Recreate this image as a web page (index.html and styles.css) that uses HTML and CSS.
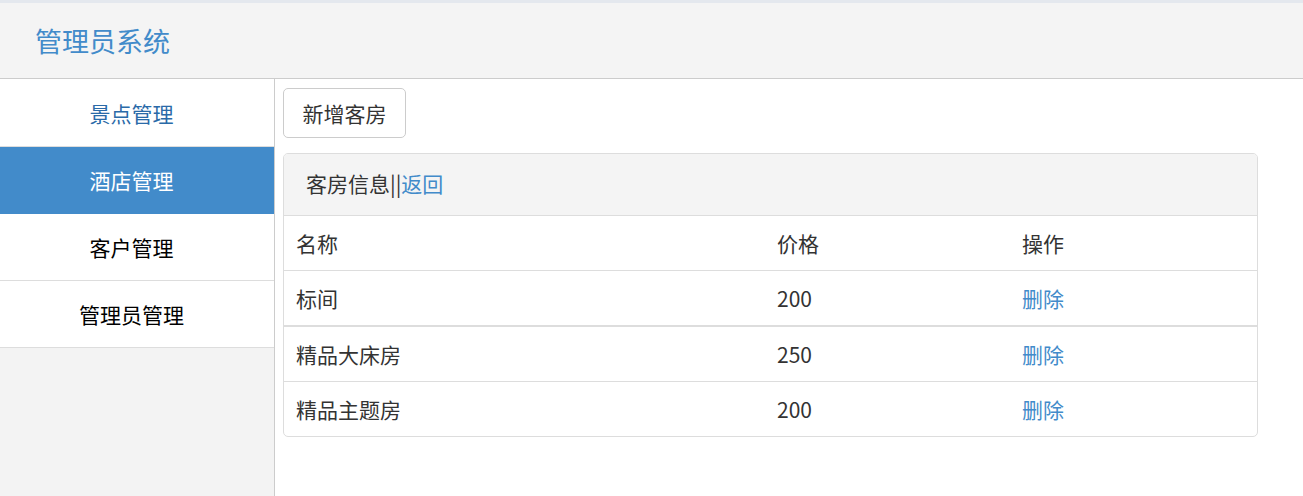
FILE: index.html
```html
<!DOCTYPE html>
<html lang="zh-CN">
<head>
<meta charset="utf-8">
<title>管理员系统</title>
<link rel="stylesheet" href="styles.css">
</head>
<body>
<div class="topstrip"></div>
<header class="header">
  <a class="brand" href="#">管理员系统</a>
</header>
<div class="main">
  <nav class="sidebar">
    <a class="nav-item nav-link" href="#">景点管理</a>
    <a class="nav-item active" href="#">酒店管理</a>
    <a class="nav-item" href="#">客户管理</a>
    <a class="nav-item" href="#">管理员管理</a>
  </nav>
  <section class="content">
    <button class="btn">新增客房</button>
    <div class="panel">
      <div class="panel-heading">客房信息||<a href="#" class="link">返回</a></div>
      <table class="table">
        <thead>
          <tr><th class="c1">名称</th><th class="c2">价格</th><th class="c3">操作</th></tr>
        </thead>
        <tbody>
          <tr class="first"><td>标间</td><td>200</td><td><a href="#" class="link">删除</a></td></tr>
          <tr><td>精品大床房</td><td>250</td><td><a href="#" class="link">删除</a></td></tr>
          <tr class="last"><td>精品主题房</td><td>200</td><td><a href="#" class="link">删除</a></td></tr>
        </tbody>
      </table>
    </div>
  </section>
</div>
</body>
</html>
```

FILE: styles.css
```css
html, body {
  margin: 0;
  padding: 0;
  height: 100%;
}
body {
  font-family: "Noto Sans CJK SC", "Noto Sans", sans-serif;
  font-size: 21px;
  color: #333;
  background: #fff;
  display: flex;
  flex-direction: column;
}
a { text-decoration: none; }
.topstrip {
  height: 3px;
  background: #e4e8ee;
}
.header {
  height: 75px;
  background: #f4f4f4;
  border-bottom: 1px solid #cccccc;
  display: flex;
  align-items: center;
  padding-left: 35px;
}
.brand {
  color: #428bca;
  font-size: 27px;
  line-height: 1;
}
.main {
  flex: 1;
  display: flex;
}
.sidebar {
  width: 274px;
  background: #f3f3f3;
  border-right: 1px solid #cccccc;
  display: flex;
  flex-direction: column;
}
.nav-item {
  height: 66px;
  display: flex;
  align-items: center;
  justify-content: center;
  padding-right: 11px;
  background: #fff;
  color: #000;
  border-bottom: 1px solid #dddddd;
  font-size: 21px;
}
.nav-item:first-child { height: 67px; }
.nav-item.nav-link { color: #2a6aa8; }
.nav-item.active {
  background: #428bca;
  color: #fff;
  border-bottom-color: #428bca;
}
.content {
  flex: 1;
  padding: 9px 0 0 8px;
}
.btn {
  font-family: inherit;
  font-size: 21px;
  color: #333;
  background: #fff;
  border: 1px solid #cccccc;
  border-radius: 5px;
  width: 123px;
  height: 50px;
  padding: 0;
  cursor: pointer;
  display: block;
}
.panel {
  margin-top: 15px;
  width: 973px;
  border: 1px solid #dddddd;
  border-radius: 5px;
  overflow: hidden;
}
.panel-heading {
  background: #f4f4f4;
  height: 62px;
  padding-bottom: 3px;
  box-sizing: border-box;
  border-bottom: 1px solid #dddddd;
  display: flex;
  align-items: center;
  padding-left: 22px;
}
.link { color: #428bca; }
.table {
  width: 100%;
  border-collapse: collapse;
}
.table th, .table td {
  text-align: left;
  font-weight: normal;
  padding: 0 12px;
  height: 54px;
}
.table thead th { border-bottom: 1px solid #dddddd; }
.table tbody tr { border-bottom: 1px solid #dddddd; }
.table tbody tr.first { border-bottom: 2px solid #dddddd; }
.table tbody tr.last { border-bottom: none; }
.c1 { width: 457px; }
.c2 { width: 221px; }
```
